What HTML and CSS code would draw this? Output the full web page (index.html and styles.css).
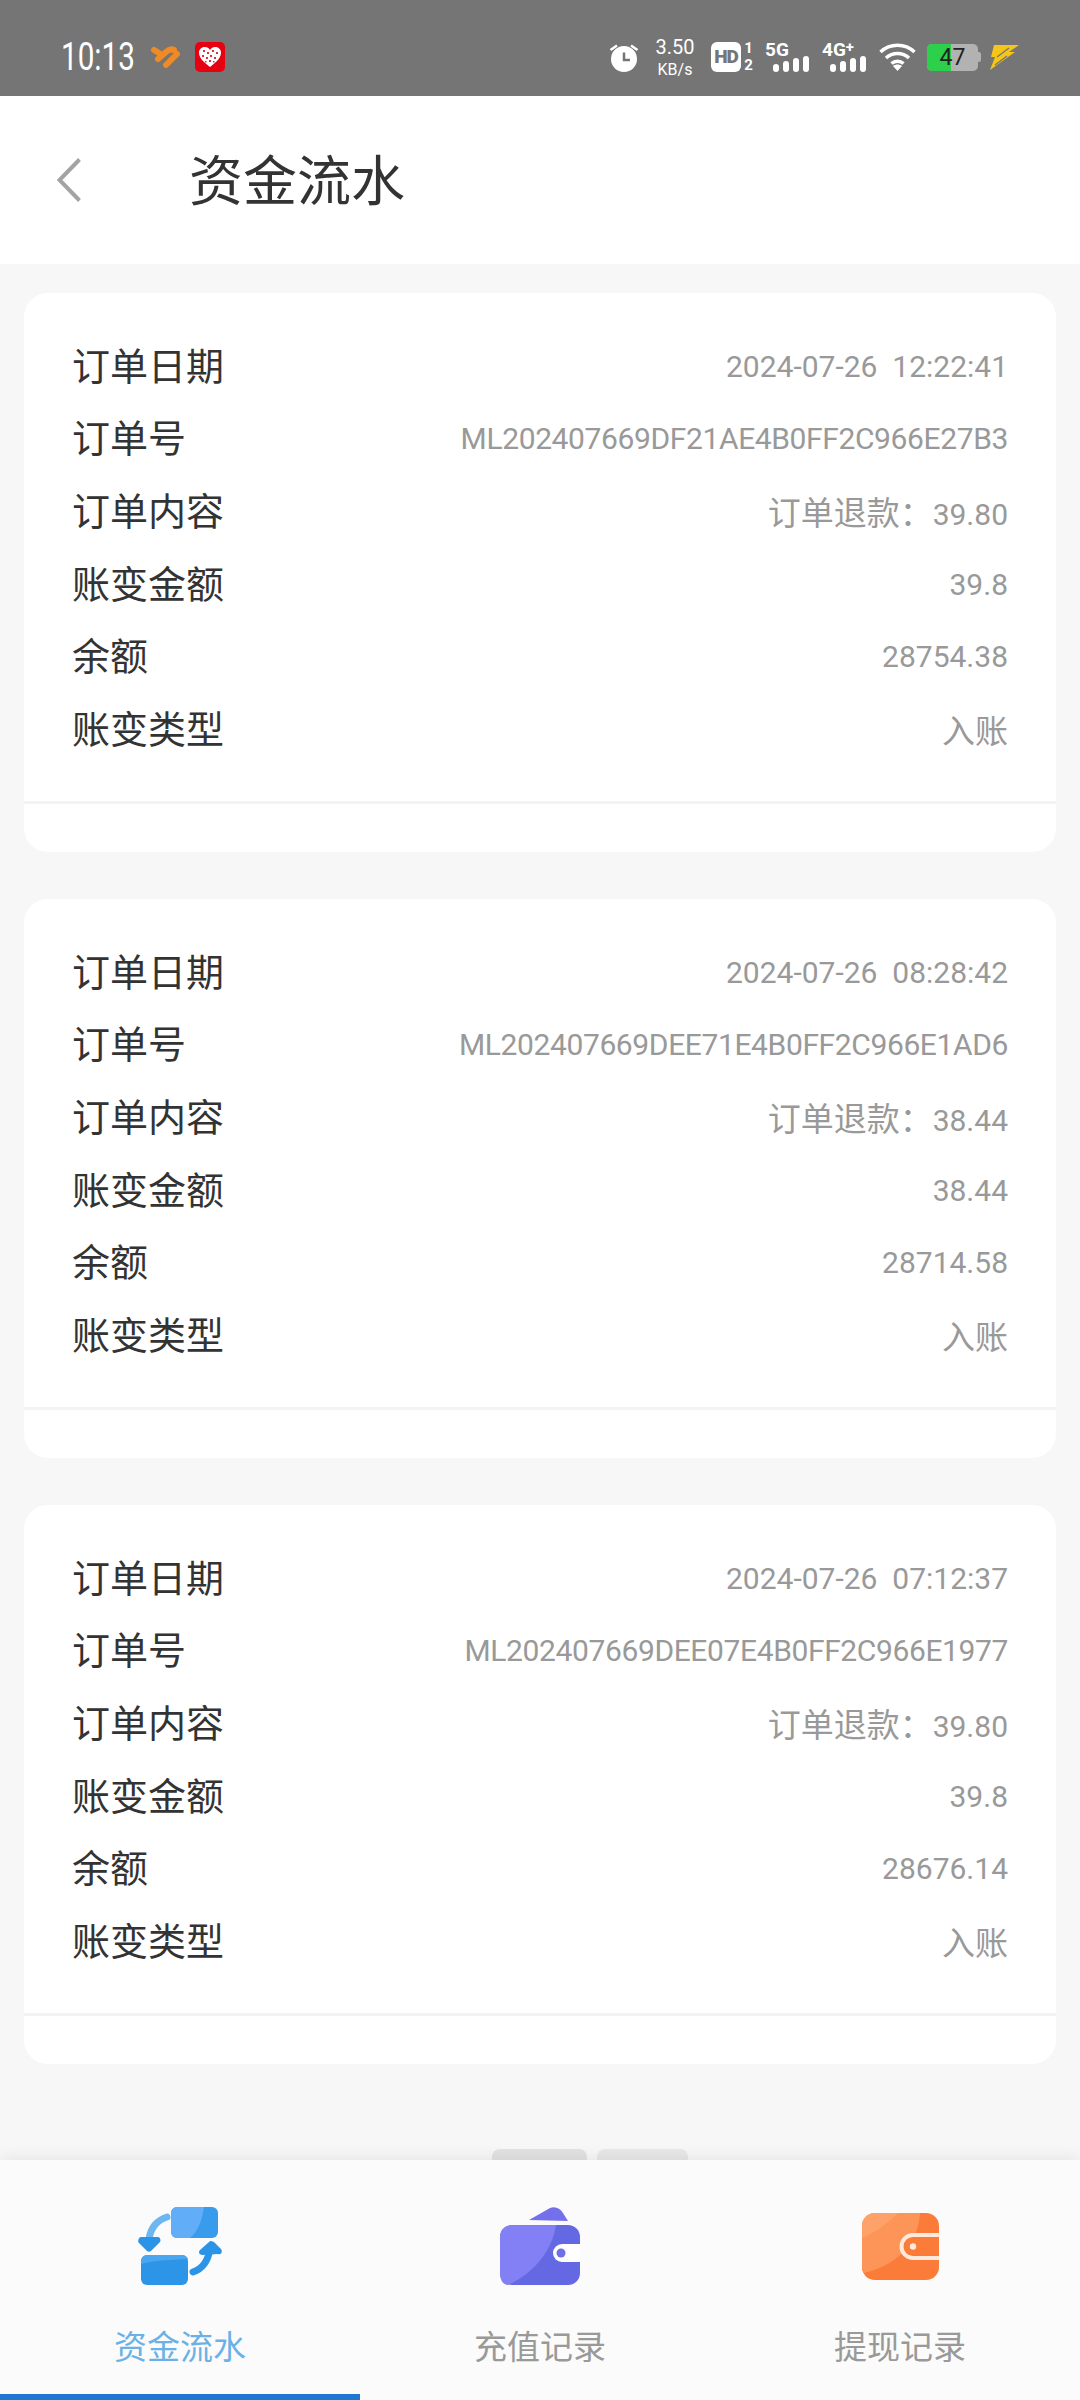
FILE: index.html
```html
<!DOCTYPE html>
<html lang="zh-CN">
<head>
  <meta charset="UTF-8" />
  <meta name="viewport" content="width=device-width, initial-scale=1.0" />
  <link rel="stylesheet" href="styles.css">
</head>
<body>

  <div class="status-bar">
    <div class="status-left">
      <span class="time">10:13</span>
      <svg class="app-heart" width="29" height="24" viewBox="0 0 29 24" fill="none" stroke="#f08a24" stroke-width="6" stroke-linecap="round" stroke-linejoin="round">
        <path d="M3 5 L8 8"/>
        <path d="M7 14 L15 7 Q19 3 23 5"/>
        <path d="M26 9 L15 20"/>
      </svg>
      <svg class="app-red" width="30" height="30" viewBox="0 0 30 30">
        <rect width="30" height="30" rx="5" fill="#e60012"/>
        <path d="M15 25 C7 19 4 15 4 10.5 C4 7 7 5 10 5 C12 5 14 6 15 8 C16 6 18 5 20 5 C23 5 26 7 26 10.5 C26 15 23 19 15 25 Z" fill="#fff"/>
        <g fill="#e0303a">
          <rect x="8" y="8" width="2" height="2"/><rect x="12" y="10" width="2" height="2"/><rect x="17" y="8" width="2" height="2"/>
          <rect x="21" y="10" width="2" height="2"/><rect x="7" y="13" width="2" height="2"/><rect x="11" y="15" width="2" height="2"/>
          <rect x="15" y="13" width="2" height="2"/><rect x="19" y="15" width="2" height="2"/><rect x="14" y="18" width="2" height="2"/>
          <rect x="10" y="19" width="1.500" height="1.500"/><rect x="18" y="19" width="1.500" height="1.500"/>
        </g>
      </svg>
    </div>
    <div class="status-right">
      <svg class="alarm" width="30" height="29" viewBox="0 0 30 29">
        <circle cx="15" cy="16" r="13" fill="#fff"/>
        <path d="M8 2.500 L1.500 7 M22 2.500 L28.500 7" stroke="#fff" stroke-width="2.500"/>
        <path d="M15 9.500 V17 H21" fill="none" stroke="#757575" stroke-width="2.500"/>
      </svg>
      <div class="speed"><span>3.50</span><span class="speed-unit">KB/s</span></div>
      <div class="hd">
        <span class="hd-box">HD</span>
        <div class="sim-nums"><span>1</span><span>2</span></div>
      </div>
      <div class="signal signal-5g">
        <span class="net">5G</span>
        <div class="bars"><i class="b1"></i><i class="b2"></i><i class="b3"></i><i class="b4"></i></div>
      </div>
      <div class="signal signal-4g">
        <span class="net">4G<sup>+</sup></span>
        <div class="bars"><i class="b1"></i><i class="b2"></i><i class="b3"></i><i class="b4"></i></div>
      </div>
      <svg class="wifi" width="37" height="28" viewBox="0 0 37 28" fill="none" stroke="#fff" stroke-width="3.500">
        <path d="M1.500 9 C11 0 26 0 35.500 9"/>
        <path d="M7 15 C13.500 9 23.500 9 30 15"/>
        <path d="M12.500 20.500 C16 17.500 21 17.500 24.500 20.500"/>
        <path d="M14 23 L18.500 28 L23 23 C20.500 21 16.500 21 14 23 Z" fill="#fff" stroke="none"/>
      </svg>
      <div class="battery">
        <div class="battery-body"><div class="battery-fill"></div><span class="battery-num">47</span></div>
        <div class="battery-nub"></div>
      </div>
      <svg class="bolt" width="29" height="25" viewBox="0 0 29 25" fill="#f5c518">
        <path d="M4 0 H29 L19 7 H25 L0 25 L5 12 H1 Z"/>
        <path d="M7 12 L19 3 M5 20 L17 11" stroke="#757575" stroke-width="1.200" fill="none"/>
      </svg>
    </div>
  </div>

  <div class="top-bar">
    <svg class="back" width="24" height="44" viewBox="0 0 24 44" fill="none" stroke="#a3a3a3" stroke-width="4">
      <path d="M22.500 1.500 L2.500 22 L22.500 42.500"/>
    </svg>
    <h1 class="title">资金流水</h1>
  </div>

  <div class="content">
    <div class="card">
      <div class="row"><span class="label">订单日期</span><span class="value">2024-07-26  12:22:41</span></div>
      <div class="row"><span class="label">订单号</span><span class="value value-order">ML202407669DF21AE4B0FF2C966E27B3</span></div>
      <div class="row"><span class="label">订单内容</span><span class="value"><span class="value-cn">订单退款：</span>39.80</span></div>
      <div class="row"><span class="label">账变金额</span><span class="value">39.8</span></div>
      <div class="row"><span class="label">余额</span><span class="value">28754.38</span></div>
      <div class="row"><span class="label">账变类型</span><span class="value value-cn">入账</span></div>
      <div class="card-line"></div>
    </div>

    <div class="card">
      <div class="row"><span class="label">订单日期</span><span class="value">2024-07-26  08:28:42</span></div>
      <div class="row"><span class="label">订单号</span><span class="value value-order">ML202407669DEE71E4B0FF2C966E1AD6</span></div>
      <div class="row"><span class="label">订单内容</span><span class="value"><span class="value-cn">订单退款：</span>38.44</span></div>
      <div class="row"><span class="label">账变金额</span><span class="value">38.44</span></div>
      <div class="row"><span class="label">余额</span><span class="value">28714.58</span></div>
      <div class="row"><span class="label">账变类型</span><span class="value value-cn">入账</span></div>
      <div class="card-line"></div>
    </div>

    <div class="card">
      <div class="row"><span class="label">订单日期</span><span class="value">2024-07-26  07:12:37</span></div>
      <div class="row"><span class="label">订单号</span><span class="value value-order">ML202407669DEE07E4B0FF2C966E1977</span></div>
      <div class="row"><span class="label">订单内容</span><span class="value"><span class="value-cn">订单退款：</span>39.80</span></div>
      <div class="row"><span class="label">账变金额</span><span class="value">39.8</span></div>
      <div class="row"><span class="label">余额</span><span class="value">28676.14</span></div>
      <div class="row"><span class="label">账变类型</span><span class="value value-cn">入账</span></div>
      <div class="card-line"></div>
    </div>

    <div class="peek"><div class="peek-pill"></div><div class="peek-pill peek-pill-b"></div></div>
  </div>

  <div class="tab-bar">
    <div class="tab tab-active">
      <div class="tab-icon">
        <svg width="84" height="79" viewBox="0 0 84 79">
          <rect x="33" y="0" width="47" height="31" rx="6" fill="#389bec"/>
          <path d="M39 0 H66 C64 14 60 24 52 31 H39 C36 31 33 28 33 25 V6 C33 3 36 0 39 0 Z" fill="#62adf8"/>
          <rect x="3" y="48" width="47" height="30" rx="6" fill="#2d95e8"/>
          <path d="M3 55 C3 51 6 48 9 48 H44 C47 48 49 50 50 52 C34 53 16 53 3 57 Z" fill="#4aa6ee"/>
          <path d="M29 10 C20 13 13 19 11 32" fill="none" stroke="#6cb6f2" stroke-width="7" stroke-linecap="round"/>
          <path d="M3 30 H20 C22 30 23 33 22 35 L13 44 C12 45 10 45 9 44 L1 36 C-1 34 1 30 3 30 Z" fill="#2c94e6"/>
          <path d="M55 65 C64 62 70 54 72 42" fill="none" stroke="#2c94e6" stroke-width="7" stroke-linecap="round"/>
          <path d="M73 34 C74 34 75 35 76 35 L83 42 C85 45 83 48 80 47 L65 48 C61 48 60 45 62 43 L71 35 C72 34 72 34 73 34 Z" fill="#2c94e6"/>
        </svg>
      </div>
      <span class="tab-label">资金流水</span>
    </div>
    <div class="tab">
      <div class="tab-icon">
        <svg width="80" height="78" viewBox="0 0 80 78">
          <path d="M29 13 L50 1 C55 -1 60 1 63 6 L68 14 Z" fill="#7470ec"/>
          <rect x="0" y="18" width="80" height="60" rx="12" fill="#6468e2"/>
          <path d="M12 18 H56 C52 44 34 66 8 78 C3 78 0 73 0 66 V30 C0 23 5 18 12 18 Z" fill="#8280f4"/>
          <path d="M62 37 H80 V55 H62 A9 9 0 0 1 62 37 Z" fill="#fff"/>
          <circle cx="61" cy="46" r="4.500" fill="#6f6fe8"/>
        </svg>
      </div>
      <span class="tab-label">充值记录</span>
    </div>
    <div class="tab">
      <div class="tab-icon">
        <svg width="77" height="67" viewBox="0 0 77 67">
          <rect width="77" height="67" rx="13" fill="#fb7b38"/>
          <path d="M13 0 H58 C56 30 36 52 2 60 C0 57 0 56 0 54 V13 C0 6 6 0 13 0 Z" fill="#fd9558"/>
          <path d="M13 0 H36 C24 12 12 20 0 25 V13 C0 6 6 0 13 0 Z" fill="#ffa26a"/>
          <path d="M77 22 H51 A11.500 11.500 0 0 0 51 45 H77" fill="#fb7b38" stroke="#ffe9dc" stroke-width="4"/>
          <circle cx="51" cy="33.500" r="3.200" fill="#ffe9dc"/>
        </svg>
      </div>
      <span class="tab-label">提现记录</span>
    </div>
    <div class="tab-indicator"></div>
  </div>

</body>
</html>
```

FILE: styles.css
```css
* {
  box-sizing: border-box;
}

body {
  display: flex;
  flex-direction: column;
  width: 1080px;
  height: 2400px;
  margin: 0;
  overflow: hidden;
  background: #f7f7f7;
  font-family: Roboto, "Noto Sans CJK SC", sans-serif;
}

/* status bar */
.status-bar {
  display: flex;
  justify-content: space-between;
  align-items: center;
  height: 96px;
  padding: 22px 61px 4px 61px;
  background: #757575;
  color: #fff;
}

.status-left {
  display: flex;
  align-items: center;
}

.time {
  display: inline-block;
  width: 90px;
  font-size: 38px;
  transform: scaleX(0.78);
  transform-origin: left center;
}

.app-red {
  margin-left: 15px;
}

.status-right {
  display: flex;
  align-items: center;
}

.speed {
  display: flex;
  flex-direction: column;
  align-items: center;
  width: 36px;
  margin-left: 18px;
  font-size: 20px;
  line-height: 25px;
}

.speed-unit {
  font-size: 16px;
  line-height: 20px;
  white-space: nowrap;
}

.hd {
  display: flex;
  align-items: center;
  margin-left: 18px;
}

.hd-box {
  width: 30px;
  height: 30px;
  border-radius: 6px;
  background: #fff;
  color: #757575;
  font-size: 19px;
  font-weight: 900;
  line-height: 30px;
  text-align: center;
  letter-spacing: -1px;
}

.sim-nums {
  display: flex;
  flex-direction: column;
  align-items: center;
  width: 11px;
  margin-left: 2px;
  font-size: 15px;
  font-weight: 700;
  line-height: 17px;
}

.signal {
  position: relative;
  display: flex;
  justify-content: flex-end;
  align-items: flex-end;
  height: 30px;
}

.signal-5g {
  width: 44px;
  margin-left: 11px;
}

.signal-4g {
  width: 44px;
  margin-left: 13px;
}

.net {
  position: absolute;
  top: -2px;
  left: 0;
  font-size: 19px;
  font-weight: 700;
  line-height: 19px;
  white-space: nowrap;
}

.net sup {
  font-size: 15px;
  line-height: 0;
  vertical-align: 4px;
}

.bars {
  display: flex;
  align-items: flex-end;
  gap: 4px;
}

.bars i {
  display: block;
  width: 6px;
  border-radius: 3px;
  background: #fff;
}

.b1 { height: 8px; }
.b2 { height: 11px; }
.b3 { height: 14px; }
.b4 { height: 16px; }

.wifi {
  margin-left: 13px;
}

.battery {
  display: flex;
  align-items: center;
  margin-left: 11px;
}

.battery-body {
  position: relative;
  width: 51px;
  height: 27px;
  border-radius: 5px;
  overflow: hidden;
  background: #b2b2b2;
}

.battery-fill {
  width: 24px;
  height: 100%;
  background: #2dd04a;
}

.battery-num {
  position: absolute;
  top: 0;
  left: 0;
  width: 100%;
  color: #222;
  font-size: 23px;
  line-height: 27px;
  text-align: center;
}

.battery-nub {
  width: 3px;
  height: 10px;
  border-radius: 0 2px 2px 0;
  background: #b2b2b2;
}

.bolt {
  margin-left: 9px;
}

/* header */
.top-bar {
  display: flex;
  align-items: center;
  height: 168px;
  padding-left: 57px;
  background: #fff;
}

.title {
  margin: 6px 0 0 108px;
  color: #333;
  font-size: 54px;
  font-weight: 400;
  line-height: 60px;
}

/* list */
.content {
  display: flex;
  flex-direction: column;
  flex: 1;
  padding: 29px 24px 0;
}

.card {
  flex-shrink: 0;
  height: 559px;
  margin-bottom: 47px;
  padding-top: 37px;
  border-radius: 24px;
  background: #fff;
}

.row {
  display: flex;
  justify-content: space-between;
  align-items: center;
  height: 72.6px;
  padding: 0 48px;
}

.label {
  padding-bottom: 6px;
  color: #333;
  font-size: 38px;
}

.value {
  color: #999;
  font-size: 30px;
  white-space: pre;
}

.value-cn {
  font-size: 33px;
}

.value-order {
  letter-spacing: -0.38px;
}

.card-line {
  height: 3px;
  margin-top: 35px;
  background: #f3f3f3;
}

.peek {
  display: flex;
  gap: 10px;
  margin-top: auto;
  padding-left: 468px;
}

.peek-pill {
  width: 95px;
  height: 11px;
  border-radius: 8px 8px 0 0;
  background: #e2e2e2;
}

.peek-pill-b {
  width: 91px;
  background: #e8e8e8;
}

/* bottom tabs */
.tab-bar {
  position: relative;
  display: flex;
  height: 240px;
  background: #fbfbfb;
  box-shadow: 0 -3px 14px rgba(0, 0, 0, 0.07);
}

.tab {
  display: flex;
  flex-direction: column;
  align-items: center;
  flex: 1;
}

.tab-icon {
  display: flex;
  justify-content: center;
  align-items: center;
  height: 90px;
  margin-top: 41px;
}

.tab-label {
  margin-top: 34px;
  color: #999;
  font-size: 33px;
  line-height: 46px;
}

.tab-active .tab-label {
  color: #6bb1e6;
}

.tab-indicator {
  position: absolute;
  bottom: 0;
  left: 0;
  width: 360px;
  height: 6px;
  background: #1e78d2;
}
```
